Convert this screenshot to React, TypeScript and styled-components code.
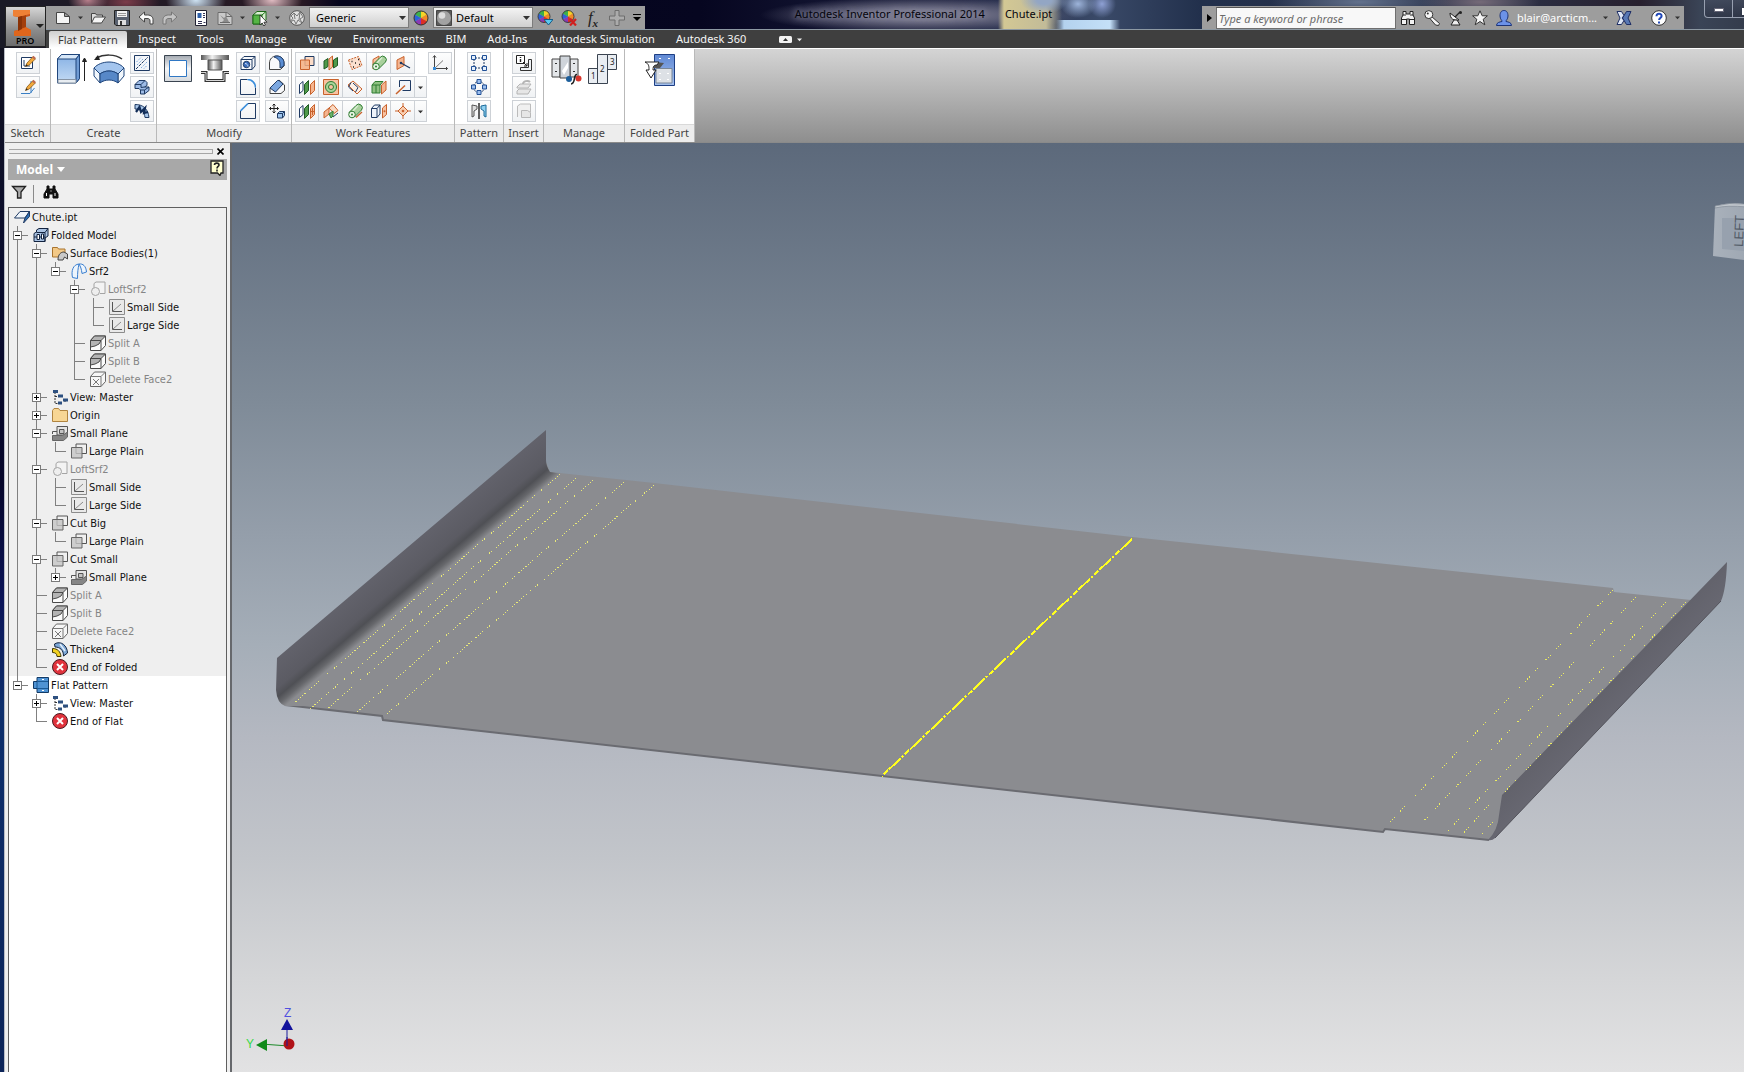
import React, { ReactNode } from "react";
import styled, { createGlobalStyle, css } from "styled-components";

const ui = `"Noto Sans", "Open Sans", sans-serif`;
const treeFont = `"DejaVu Sans Condensed", "DejaVu Sans", sans-serif`;

const Global = createGlobalStyle`
  * { box-sizing: border-box; }
  html, body { margin: 0; height: 100%; overflow: hidden; }
  #root { height: 100%; }
  body { font-family: ${ui}; font-size: 11px; color: #222; }
  button, input, select { font: inherit; color: inherit; margin: 0; }
  button { border: 0; background: none; padding: 0; cursor: default; }
`;

/* ---------- layout ---------- */

const Window = styled.div`
  display: flex;
  flex-direction: column;
  min-height: 100vh;
  height: 100%;
  background: linear-gradient(#14141f 0, #0a0d2e 25%, #06062a 45%, #0b1458 56%, #0e2f6c 66%, #0c2458 100%);
`;

const Header = styled.header`
  display: grid;
  grid-template-columns: 42px 1fr;
  grid-template-rows: 30px 18px;
  flex: none;
  padding-left: 4px;
  background:
    radial-gradient(ellipse 20px 14px at 88px 0, #b8808c, transparent),
    radial-gradient(ellipse 34px 14px at 126px 2px, #7c3c4a, transparent),
    radial-gradient(ellipse 30px 20px at 196px 0, #cfe4f4, transparent),
    radial-gradient(ellipse 30px 18px at 272px 0, #e0bcc2, transparent),
    radial-gradient(ellipse 24px 14px at 1044px 0, #93a6c4 30%, transparent),
    linear-gradient(90deg, #d3c89400 998px, #d3c894 1004px, #c2bb98 1046px, #b8b79c00 1062px) 0 0 / 100% 29px no-repeat,
    radial-gradient(ellipse 18px 14px at 1078px 4px, #9db4da, transparent),
    radial-gradient(ellipse 14px 14px at 1102px 4px, #8ea0d4, transparent),
    linear-gradient(90deg, #bcdcf800 1056px, #b4d2ee 1064px, #c4e0f8 1110px, #bcdcf800 1120px) 0 20px / 100% 9px no-repeat,
    radial-gradient(ellipse 160px 18px at 920px 15px, #77778c 30%, #77778c00),
    radial-gradient(ellipse 90px 16px at 1360px 2px, #62718c, transparent),
    radial-gradient(ellipse 60px 16px at 1480px 2px, #756a78, transparent),
    linear-gradient(90deg, #1a1a26 0, #2a1a24 300px, #04041c 340px, #060620 700px, #1d2140 960px, #3a4a68 1100px, #22304c 1200px, #2c3248 1500px, #28202e 1640px, #3a4456 1700px, #343c4c);
`;

const AppButton = styled.button`
  grid-row: 1 / 3;
  margin: 6px 0 1px 1px;
  border: 1px solid #222;
  background: linear-gradient(#d6d6d6, #8b8b8b 60%, #6c6c6c);
  display: flex;
  flex-direction: column;
  align-items: flex-start;
  font-size: 9px;
  font-weight: 600;
  line-height: 10px;
  color: #000;
  svg { display: block; }
`;
const AppLabel = styled.span`padding-left: 10px;`;

const TitleBar = styled.div`
  display: flex;
  align-items: stretch;
  border-bottom: 1px solid #8d99a3;
  min-width: 0;
`;

const Bar = styled.div<{ $pad?: number }>`
  display: flex;
  align-items: center;
  flex: none;
  margin-top: 6px;
  background: #9d9d9d;
  padding-left: ${(p) => p.$pad ?? 0}px;
`;

const ToolButton = styled.button<{ $w?: number }>`
  width: ${(p) => p.$w ?? 24}px;
  height: 22px;
  flex: none;
  display: flex;
  align-items: center;
  justify-content: center;
`;
const FxButton = styled(ToolButton)`
  font-family: "Liberation Serif", serif;
  font-style: italic;
  font-size: 17px;
  color: #222;
  sub { font-size: 11px; font-weight: 700; line-height: 1; align-self: flex-end; }
`;
const Spacer = styled.span<{ $w: number }>`
  width: ${(p) => p.$w}px;
  flex: none;
`;

const SelectWrap = styled.label`
  position: relative;
  display: flex;
  align-items: center;
  width: 100px;
  height: 21px;
  border: 1px solid #7c7c7c;
  background: linear-gradient(#f4f4f4, #cfcfcf);
  padding-left: 2px;
  > svg:last-child { position: absolute; right: 2px; pointer-events: none; }
`;
const Select = styled.select`
  appearance: none;
  border: 0;
  background: none;
  flex: 1;
  min-width: 0;
  padding: 0 12px 0 4px;
  color: #000;
  outline: 0;
`;

const Title = styled.h1`
  flex: 1;
  min-width: 0;
  margin: 0;
  display: flex;
  justify-content: center;
  gap: 20px;
  white-space: nowrap;
  font-size: 11px;
  line-height: 28px;
  font-weight: 400;
  color: #05050c;
`;
const Product = styled.span`
  text-shadow: 0 0 6px #8c8ca2, 0 0 8px #8484a0;
`;

const SearchInput = styled.input`
  width: 180px;
  height: 22px;
  border: 1px solid #6f6f6f;
  border-top-color: #555;
  background: #f8f8f8;
  padding: 2px 2px 0;
  font-style: italic;
  &::placeholder { color: #6a6a6a; opacity: 1; }
`;
const UserButton = styled.button`
  display: flex;
  align-items: center;
  gap: 5px;
  width: 112px;
  color: #fff;
  svg { flex: none; }
`;
const UserName = styled.span`flex: 1; text-align: left; white-space: nowrap;`;

const Controls = styled.div`
  flex: none;
  width: 60px;
  padding-left: 20px;
  overflow: hidden;
  display: flex;
  align-items: flex-start;
`;
const ControlButton = styled.button<{ $first?: boolean }>`
  width: 29px;
  flex: none;
  height: 18px;
  border: 1px solid #98a0b0;
  border-top: 0;
  background: linear-gradient(#48506488, #2a304288);
  ${(p) => (p.$first ? css`border-bottom-left-radius: 4px;` : css`border-left: 0;`)}
  padding-left: 9px;
  padding-top: 8px;
  display: flex;
`;

const Tabs = styled.nav`
  display: flex;
  align-items: stretch;
  background: #3f3f3f;
  padding-left: 3px;
  min-width: 0;
`;
const Tab = styled.button<{ $active?: boolean }>`
  padding: 0 11px 0 10px;
  line-height: 16px;
  white-space: nowrap;
  color: #f6f6f6;
  ${(p) =>
    p.$active &&
    css`
      margin-top: 1px;
      padding: 0 9px;
      margin-right: 1px;
      color: #3a3a3a;
      background: linear-gradient(#cfcfcf, #fff);
      border-radius: 2px 2px 0 0;
    `}
`;
const TabTools = styled.div`
  display: flex;
  align-items: center;
  gap: 5px;
  padding-left: 22px;
`;

const Frame = styled.div`
  flex: 1;
  min-height: 0;
  display: flex;
  flex-direction: column;
  margin-left: 4px;
  border-left: 1px solid #b8bcc4;
  background: #efefef;
`;

const Ribbon = styled.div`
  display: flex;
  flex: none;
  height: 95px;
  border-top: 1px solid #fff;
  border-bottom: 1px solid #8a8a8a;
  background: linear-gradient(#d4d4d4, #8e8e8e);
`;
const Group = styled.section<{ $w: number }>`
  width: ${(p) => p.$w}px;
  flex: none;
  display: flex;
  flex-direction: column;
  background: #fff;
  border-right: 1px solid #b9b9b9;
`;
const GroupBody = styled.div<{ $end?: boolean; $gap: number }>`
  flex: 1;
  display: flex;
  align-items: flex-start;
  justify-content: ${(p) => (p.$end ? "flex-end" : "center")};
  gap: ${(p) => p.$gap}px;
  padding: 3px ${(p) => (p.$end ? 2 : 0)}px 0 0;
`;
const GroupLabel = styled.h2`
  margin: 0;
  height: 18px;
  line-height: 16px;
  font-size: 11px;
  font-weight: 400;
  text-align: center;
  white-space: nowrap;
  color: #444;
  background: #ededed;
  border-top: 1px solid #d9d9d9;
`;
const Column = styled.div`
  display: flex;
  flex-direction: column;
  gap: 2px;
`;
const ButtonRow = styled.div`display: flex;`;
const Small = styled.button<{ $w?: number }>`
  width: ${(p) => p.$w ?? 24}px;
  height: 22px;
  border: 1px solid #cdd1d6;
  background: linear-gradient(#fdfdfd, #f0f2f4);
  display: flex;
  align-items: center;
  justify-content: center;
  & + & { border-left: 0; }
`;
const Big = styled.button`
  width: 32px;
  padding-top: 1px;
  display: flex;
  justify-content: center;
`;

const Work = styled.main`
  flex: 1;
  min-height: 0;
  display: flex;
`;
const Panel = styled.aside`
  width: 227px;
  flex: none;
  display: flex;
  flex-direction: column;
  background: #efefef;
  border-right: 2px solid #66686c;
  padding: 0 3px;
`;
const Grip = styled.div`
  display: flex;
  align-items: center;
  justify-content: space-between;
  height: 16px;
  padding-left: 1px;
`;
const GripLines = styled.div`
  flex: 1;
  height: 5px;
  border: 1px solid #a6a6a6;
  border-left: 0;
`;
const CloseButton = styled.button`
  width: 14px;
  height: 14px;
  display: flex;
  align-items: center;
  justify-content: flex-end;
  padding-right: 3px;
`;
const PanelHeader = styled.div`
  display: flex;
  align-items: center;
  justify-content: space-between;
  height: 21px;
  padding: 0 3px 0 8px;
  background: #a8a8a8;
`;
const PanelTitle = styled.button`
  display: flex;
  align-items: center;
  gap: 4px;
  font-family: "Open Sans", "Noto Sans", sans-serif;
  font-size: 12px;
  font-weight: 700;
  color: #fff;
`;
const PanelTools = styled.div`
  display: flex;
  align-items: center;
  height: 27px;
  padding-left: 3px;
`;
const Divider = styled.span`
  width: 1px;
  height: 18px;
  margin: 0 9px 0 6px;
  background: #8a8a8a;
`;
const Tree = styled.div`
  flex: 1;
  min-height: 0;
  overflow: hidden;
  border: 1px solid #5f5f5f;
  border-bottom: 0;
  background: #fff;
  font-family: ${treeFont};
  font-size: 11px;
`;
const Row = styled.div<{ $shade: boolean; $dim?: boolean }>`
  display: flex;
  align-items: center;
  height: 18px;
  background: ${(p) => (p.$shade ? "#efefef" : "#fff")};
  color: ${(p) => (p.$dim ? "#858585" : "#111")};
  white-space: nowrap;
  svg { flex: none; margin: 0 2px 0 5px; }
`;
const Guide = styled.span<{ $up: boolean; $down: boolean; $arm: boolean }>`
  width: 19px;
  height: 18px;
  flex: none;
  display: flex;
  align-items: center;
  padding-left: 4px;
  background-repeat: no-repeat;
  background-image: linear-gradient(#808080, #808080), linear-gradient(#808080, #808080), linear-gradient(#808080, #808080);
  background-size: ${(p) => (p.$up ? "1px 9px" : "0 0")}, ${(p) => (p.$down ? "1px 9px" : "0 0")}, ${(p) => (p.$arm ? "11px 1px" : "0 0")};
  background-position: 8px 0, 8px 9px, 8px 9px;
`;
const Expander = styled.button`
  width: 9px;
  height: 9px;
  border: 1px solid #7a7a7a;
  background: #fff;
  display: grid;
  place-items: center;
  svg { margin: 0; display: block; }
`;

const Viewport = styled.div`
  flex: 1;
  min-width: 0;
  overflow: hidden;
  background: linear-gradient(#5c697b 0, #7f8b98 28%, #949eaa 42%, #a5aeb8 54%, #b4b8c1 64%, #c2c5ca 77%, #d5d6d8 90%, #e2e2e3 100%);
  svg { display: block; width: 100%; height: 100%; }
`;

/* ---------- icons ---------- */

const N = "#1f3a63";
const O = "#c8622c";
const G = "#2f7d32";

const Ic = ({ children, s = 16, w, h }: { children: ReactNode; s?: number; w?: number; h?: number }) => (
  <svg width={w ?? s} height={h ?? s} viewBox={`0 0 ${w ?? s} ${h ?? s}`} fill="none" aria-hidden="true">
    {children}
  </svg>
);

const Down = ({ c = "#333", s = 7 }: { c?: string; s?: number }) => (
  <svg width={s} height={s} viewBox="0 0 7 7" aria-hidden="true">
    <path d="M0 2h7L3.500 6z" fill={c} />
  </svg>
);

const pencil = (
  <>
    <path d="M5.500 11.500 7 8l6-6.500 2.500 2.300L9.300 10z" fill="#f2a93c" stroke="#8a5a14" strokeWidth=".8" />
    <path d="m12 2.500 1.500-1.700 2.300 2.200-1.500 1.600z" fill="#c06a50" />
    <path d="m5.500 11.500 1-2.300 1.400 1.300z" fill="#222" />
  </>
);
const Wheel = ({ x = 8, y = 8, r = 7 }: { x?: number; y?: number; r?: number }) => (
  <g transform={`translate(${x} ${y}) scale(${r / 7})`}>
    <path d="M0 0V-7A7 7 0 0 1 6 -3.500z" fill="#f5d327" />
    <path d="M0 0 6-3.500A7 7 0 0 1 6 3.500z" fill="#f08a24" />
    <path d="M0 0 6 3.500A7 7 0 0 1 0 7z" fill="#dc2f26" />
    <path d="M0 0V7A7 7 0 0 1-6 3.500z" fill="#8a3ab4" />
    <path d="M0 0-6 3.500A7 7 0 0 1-6-3.500z" fill="#2d62d8" />
    <path d="M0 0-6-3.500A7 7 0 0 1 0-7z" fill="#3cb04a" />
    <circle r="7" stroke="#333" strokeWidth="1" />
  </g>
);
const planeL = <path d="M.5 5.500 4 2.500v9l-3.500 3z" fill="#fff" stroke={N} />;
const planeG = <path d="m5.500 5.500 4-4v10l-4 4z" fill="#4f9a4a" stroke="#1f5a24" />;
const planeO = <path d="m11.500 5.500 4-4v10l-4 4z" fill="#f5b590" stroke={O} />;
const cyl = (
  <>
    <path d="M2 9.500 9 2.500a3.500 3.500 0 0 1 5.500 4.500L7.500 14" fill="#a8d09c" stroke={G} />
    <path d="m6 8 5-5.500" stroke="#d8ecd0" strokeWidth="1.500" />
    <circle cx="5" cy="11.500" r="3.300" fill="#eaf5e5" stroke={G} />
    <circle cx="5" cy="11.500" r="1" fill={G} />
  </>
);

const icons: Record<string, ReactNode> = {
  newDoc: <path d="M1.500 2.500h8l5 4v7h-13z M9.500 2.500v4h5" fill="#f4f4f4" stroke="#444" />,
  open: <><path d="M1.500 12.500v-9h4l1 1.500h6v2" fill="#ddd" stroke="#444" /><path d="m1.500 13 3-6h11l-4 6z" fill="#f6f6f6" stroke="#444" /></>,
  save: <><path d="M.5 .5h15v15H2l-1.500-1.500z" fill="#5a6270" stroke="#222" /><path d="M3 1h10v6H3z" fill="#f2f2f2" /><path d="M4 10h8v5H4z" fill="#ddd" /><path d="M6 11h2v4H6z" fill="#333" /><path d="M4 3.500h8M4 5.500h8" stroke="#999" /></>,
  undo: <path d="M1 7 6.500 2v3h3c4 0 5.500 2.500 5.500 4.500V14h-3v-3c0-2-1-2.500-3-2.500H6.500v3.500z" fill="#fafafa" stroke="#444" />,
  redo: <path d="M15 7 9.500 2v3h-3C2.500 5 1 7.500 1 9.500V14h3v-3c0-2 1-2.500 3-2.500h2.500v3.500z" fill="#c4c4c4" stroke="#777" />,
  local: <><path d="M2.500.5h11v15h-11z" fill="#fff" stroke="#223" /><path d="M4.500 3h4v5h-4z" fill="#2d5fa8" /><path d="M10 3.500h2M10 5.500h2M10 7.500h2M5 11.500h4M5 13.500h4M10.500 12.500h2" stroke="#335" /></>,
  update: <><path d="M1 2.500h9l5 4v8H1z" fill="#c9c9c9" stroke="#6c6c6c" /><path d="M9 2.500v4h6" stroke="#6c6c6c" /><path d="m3 5 4 3 2-2 3 6H5l2-2z" fill="#8b8b8b" /><path d="M3 12.500h10" stroke="#6c6c6c" /></>,
  pick: <><path d="M1 5 5 1.500h9V10l-4 4H1z" fill="#d8f0d0" stroke="#1d6a18" /><path d="M1 5h9v9H1z" fill="#55b545" stroke="#1d6a18" /><path d="m10 5 4-3.500" stroke="#1d6a18" /><path d="M8 5v10l2.200-2 1.500 3 1.700-1-1.500-2.800H15z" fill="#fff" stroke="#222" strokeWidth=".8" /></>,
  ball: <><circle cx="8" cy="8" r="7.300" fill="#e0e0e0" stroke="#555" /><path d="m2 6 3-3 3 3 3-4 3 5-3 2 2 4-4-3-2 4-2-4-4 2 3-4z M5 3l1 6M11 2l-1 8" stroke="#777" /></>,
  wheel: <Wheel />,
  sphere: <><path d="M.5.500h15v15H.5z" fill="#5c5c5c" stroke="#444" /><circle cx="8" cy="8" r="7" fill="#a2a2a2" /><circle cx="6" cy="5.500" r="3.300" fill="#ddd" /></>,
  wheelDown: <><Wheel x={7} y={6.500} r={6} /><path d="M7 9.500h9L11.500 15z" fill="#5cc8ee" stroke="#155a88" /></>,
  wheelX: <><Wheel x={7} y={6.500} r={6} /><path d="m9 9 6 6.500m0-6.500-6 6.500" stroke="#d02020" strokeWidth="2.200" /></>,
  plus: <path d="M6 .5h4v5.500h5.500v4H10v5.500H6V10H.5V6H6z" stroke="#6d6d6d" fill="#ababab" />,
  binoc: <><path d="M3 1.500h3V4h4V1.500h3V5l1.500 3v6.500h-5V9h-3v5.500h-5V8L3 5z" fill="#f2f2f2" stroke="#222" /><path d="M1.500 9.500h5M9.500 9.500h5M3 5h3M10 5h3" stroke="#222" /></>,
  key: <><path d="m7 6 8.500 7.500-1 2-3-.5L5.500 8z" fill="#f4f4f4" stroke="#333" /><circle cx="4.800" cy="4.600" r="4" fill="#f4f4f4" stroke="#333" /><circle cx="3.800" cy="3.500" r="1" fill="#333" /></>,
  dish: <><path d="M2 3c0 6 4 8 9 7z" fill="#f6f6f6" stroke="#222" /><path d="m7 7 5-5" stroke="#222" strokeWidth="1.300" /><path d="m6 10-3 5h9l-3-5z" fill="#eee" stroke="#222" /><circle cx="12.500" cy="2.500" r="1.500" fill="#222" /></>,
  star: <path d="m8 .8 2.200 5h5.200l-4.200 3.500 1.600 5.500L8 11.500l-4.800 3.300 1.600-5.500L.6 5.800h5.200z" fill="#f4f4f4" stroke="#333" />,
  user: <><path d="M.5 15.500c0-3 3-3.500 5.500-4 .5-1-2-2-2-5.500C4 2 5.800.5 8 .5S12 2 12 6c0 3.500-2.500 4.500-2 5.500 2.500.5 5.500 1 5.500 4z" fill="#6c92e8" stroke="#1d3478" /></>,
  xch: <><path d="M1 1.500h4.500L8 5.500l-2 2.500 2 2.500-2.500 4H1L4 8z" fill="#dfe7f6" stroke="#1f2f66" /><path d="M15 1.500h-4.500L6.500 8l4 6.500H15L12 8z" fill="#5878b4" stroke="#1f2f66" /></>,
  help: <><circle cx="8" cy="8" r="7.300" fill="#fff" stroke="#333" /><path d="M5.500 6.200C5.500 3 10.600 3 10.600 6c0 2-2.500 2-2.500 4M8 11.500v2" stroke="#2148b8" strokeWidth="2" /></>,

  sk1: <><path d="M1.500 2.500h11v11h-11z" fill="#fff" stroke={N} /><path d="M4 11V5M4 11h6" stroke={N} />{pencil}</>,
  sk2: <><path d="M1 14.500h9M10 14.500 14.500 9M11 2v12" stroke="#3a7fc4" />{pencil}</>,
  face: <><path d="M.5.500h15v15H.5z" fill="#f3f6fa" stroke={N} /><path d="M2 14 14 2" stroke={N} strokeDasharray="3 1" /><path d="m2.500 7 4.500-4.500M3 10l7-7M7 13l6.500-6.500M10 13.500l3.500-3.500" stroke="#4a8ad0" strokeDasharray="1 1.500" /></>,
  fold: <><path d="m1 5.500 4-4h6l2 2v3l-2.500 1.500h4.500v3.500L10.500 15h-4v-4L5 9.500H1z" fill="#9dbbe6" stroke={N} /><path d="M1 5.500h6l4-4M7 5.500v3l3.500-.5M6.500 11h4l4.500-3M10.500 11v4" stroke={N} /></>,
  contour: <><path d="M1 1.500c8 0 13 4 14 13h-4C10.500 9 7 6 1 6z" fill="#a9c8ec" stroke={N} /><path d="m2 9 3.500-5 1.500 5 4-4-1 5 4-1" stroke="#122d58" strokeWidth="2.200" /></>,
  hole: <><path d="M1 4.500 4 1.500h11V11l-3 3.500H1z" fill="#f6f8fb" stroke={N} /><path d="M1 4.500h11v10M12 4.500l3-3" stroke={N} /><circle cx="6.500" cy="9.500" r="3.200" fill="#3b6fc0" stroke={N} /><path d="M5 8.500c2 0 3 2 3 3" stroke="#dfe8f6" /></>,
  bendS: <><path d="M.5 14.500V8c0-4 3-7 7-7s7.500 3 7.500 7v3l-3.500 3.500z" fill="#f8f9fb" stroke="#444" /><path d="M5 2c1-1 2-1 3-1 4 0 7 3 7 7v3l-4 2V9C11 5 8 3 5 2z" fill="#5b8ed4" stroke={N} /></>,
  round: <><path d="M.5.500h7M15.500 8.500v7H.5V.5" stroke={N} /><path d="M7.500.500a8 8 0 0 1 8 8" stroke="#3b8edb" strokeWidth="1.600" /></>,
  chamfer3: <><path d="M1 9v5.500h11l3.500-3V6L10 1z" fill="#f8f9fb" stroke="#444" /><path d="M1 9 8.500 1.500H10L14 5l-7.500 8z" fill="#7ba7e0" stroke={N} /></>,
  chamfer: <><path d="M8 .5h7.500v15H.5V8" stroke={N} /><path d="M.5 8 8 .5" stroke="#3b8edb" strokeWidth="1.600" /></>,
  move: <><path d="M5 1v9M.5 5.500h9M3.500 2.500 5 1l1.500 1.500M3.500 8.500 5 10l1.500-1.500M2 4 .5 5.500 2 7M8 4l1.500 1.500L8 7" stroke="#222" /><path d="m8.500 10.500 2-2h5v4l-2 2.500h-5z" fill="#9fc6ee" stroke={N} /><path d="M8.500 10.500h5V15M13.500 10.500l2-2" stroke={N} /></>,

  w1: <><path d="M6 1.500h9v9H6z" fill="#fbdcc8" stroke={N} /><path d="M1.500 5h9v9.500h-9z" fill="#f5ae80" stroke={O} fillOpacity=".85" /></>,
  w2: <><path d="m1 6 4-2.500v8L1 14z" fill="#4f9a4a" stroke="#1f5a24" /><path d="m10.500 5 4-2.500v8l-4 2.500z" fill="#4f9a4a" stroke="#1f5a24" /><path d="m6 4 3.500-3v11L6 15z" fill="#f7c2a2" stroke={O} /></>,
  w3: <><path d="m1.500 5 10-3.500 3.500 9-10 4z" fill="#fbe0cf" stroke={O} strokeDasharray="2 1" /><path d="M4.500 6.500h1M11 4.500h1M8 8h1M6 12h1M12 9.500h1" stroke="#222" strokeWidth="1.600" /></>,
  w4: <><path d="M2 4.500 8 1v9l-6 4z" fill="#f7c2a2" stroke={O} />{cyl}</>,
  w5: <><path d="m2 5 7-3.500v9L2 14.500z" fill="#f5b590" stroke={O} /><path d="m6 8 9 5" stroke={N} strokeWidth="1.300" /><circle cx="6" cy="8" r="1.300" fill={N} /></>,
  w6: <>{planeL}{planeG}{planeO}</>,
  w7: <><path d="M.5.500h15v15H.5z" fill="#f7c2a2" stroke={O} /><circle cx="8" cy="8" r="5.500" fill="#a8d49a" stroke={G} /><circle cx="8" cy="8" r="2.500" fill="#f7c2a2" stroke={G} /></>,
  w8: <><path d="m1 6 5-4 9 8-5 5z" fill="#fdf0e6" stroke={O} /><path d="M4 3.500 1.500 8 6 12M6 4l5 4.500L8.500 13" stroke={N} /></>,
  w9: <><path d="m1 6 3-3.500h8L9 6v8H1z" fill="#8fc182" stroke={G} /><path d="M1 6h8M5 6v8" stroke={G} /><path d="m10.500 6 4.500-4v9l-4.500 4z" fill="#f5b590" stroke={O} /></>,
  w10: <><path d="M4.500 1.500h11v10h-8M4.500 1.500V8" fill="#f0f3f8" stroke={N} /><path d="m1 15 9-8.500" stroke={O} strokeWidth="1.500" /></>,
  w11: <>{planeL}{planeG}{planeO}<path d="M13.500 5v7M12 8.500h3" stroke={O} /></>,
  w12: <><path d="m1 9 5-4v6l-5 4z" fill="#f5b590" stroke={O} /><path d="m6 5 4-3.500 5 6-4 3z" fill="#fbd8c0" stroke={O} /><path d="m6 11 4-3v5l-2 2z" fill="#6ab06a" stroke={G} /><path d="m10 14 5-4" stroke={N} /></>,
  w13: <>{cyl}<path d="m9 14.500 6-5.500" stroke={O} strokeWidth="1.300" /></>,
  w14: <><path d="m.5 5.500 3-3.500h5.500v9l-3 3.500H.5z" fill="#eef3fa" stroke={N} /><path d="M.5 5.500H6v9M6 5.500 9 2" stroke={N} /><path d="m11.500 5 4-3.500v10l-4 3.500z" fill="#f7c2a2" stroke={O} /><circle cx="13.500" cy="8.300" r="1" fill={O} /></>,
  w15: <><path d="m8 3 5 5-5 5-5-5z" fill="#f9cfb2" stroke={O} /><path d="M8 0v4M8 12v4M0 8h4M12 8h4" stroke={O} /><circle cx="8" cy="8" r="1.300" fill={O} /></>,
  axis: <><path d="M2.500 1v12.500h13M1 2.500l1.500-2 1.500 2M14 12l1.500 1.500L14 15" stroke="#444" /><path d="m2.500 13.500 8.500-8" stroke="#777" /><path d="M1 12h3v3H1z" fill="#3b8edb" /></>,
  p1: <><path d="M4 3h8M4 13h8M3 4v8M13 4v8" stroke={N} strokeDasharray="2 1" /><path d="M.5.500h4v4h-4zM11.500.500h4v4h-4zM.5 11.500h4v4h-4zM11.500 11.500h4v4h-4z" fill="#e4effc" stroke="#1f4f96" /></>,
  p2: <><circle cx="8" cy="8" r="5.500" stroke={N} strokeDasharray="2 1" /><path d="M6 .5h4v4H6zM6 11.500h4v4H6zM.5 6h4v4h-4zM11.500 6h4v4h-4z" fill="#9dbfee" stroke="#1f4f96" /></>,
  p3: <><path d="M8 0v16" stroke="#222" strokeWidth="1.400" /><path d="M1 2v12l2-1V8l3-2V3z" fill="#ddd" stroke="#555" /><path d="M15 2v12l-2-1V8l-3-2V3z" fill="#8fd0f0" stroke="#1b6a9a" /></>,
  i1: <><path d="M.5.500h8v8h-8z" fill="#fff" stroke="#222" /><path d="M4.500 2v1M4.500 4v3" stroke="#222" strokeWidth="1.400" /><path d="M12.500 4.500h3v11h-11v-3h8z" fill="#eef1f4" stroke="#333" /><path d="m7 7 4 4M11 8v3H8" stroke="#222" /></>,
  i2: <><path d="m1 8 3-3h11l-3 4H1z M1 12l2-2h12l-3 5H1z" fill="#e6e6e6" stroke="#b4b4b4" /><path d="M7 5c0-3 5-4 7-2" stroke="#b4b4b4" strokeWidth="2" /></>,
  i3: <><path d="M1.500 14V3l3-2h10v8" stroke="#bcbcbc" fill="#f0f0f0" /><path d="M5.500 7.500h6l3 2v5h-9z" fill="#e6e6e6" stroke="#b8b8b8" /></>,

  part: <><path d="M.5 9 6 2.500h9.500L11 9z" fill="#f0f6fc" stroke={N} /><path d="m11 9 4.500-6.500v5L9.500 14z" fill="#2d6fb4" stroke={N} /></>,
  folded: <><path d="M1 6.500 3.500 5V3L6 1.500h9V9l-3 2v3.500H1z" fill="#a9c2e2" stroke="#12233f" /><path d="M3.500 5.500H12v9M12 5.500l3-4M1 10h11" stroke="#12233f" /><path d="M4 7.500h2.500v5H4zM8.500 7h2v5h-2z" fill="#fff" stroke="#12233f" /></>,
  bodies: <><path d="M.5 12V2.500h5l1 1.500H13v8z" fill="#f3c987" stroke="#a9742e" /><path d="M6 15c0-6 3-8 6-8l3.500 2v5l-3-2-1.500 3z" fill="#c9c9c9" stroke="#444" /></>,
  srf: <path d="M1.500 14.500C0 8 2 1.500 8 1c4-.5 7 2 7.500 8L11 10.500C10.500 6 9.500 3.500 8 1M1.500 14.500l5 1c0-6 .5-10 1.500-14.500" fill="#edf5fd" stroke="#3a7fd0" />,
  loft: <><path d="M4 2.500 6 1h9v11.500h-5M4 7V2.500" stroke="#a4a4a4" fill="#f3f3f3" /><circle cx="5.500" cy="10.500" r="4" fill="#eee" stroke="#a4a4a4" /></>,
  sketch: <><path d="M.5.500h15v15H.5z" fill="#e9e9e9" stroke="#8c8c8c" /><path d="M3.500 3v9.500H13" stroke="#555" /><path d="m4 12 8-7" stroke="#8a8a8a" /></>,
  split: <><path d="m.5 5.500 4-4.500h11v9.500l-4.500 5H.5z" fill="#fbfbfb" stroke="#4a4a4a" /><path d="m.5 5.500 4-4.500h11L11 5.500 9 9l-4 2-4.500 1z" fill="#b4b4b4" stroke="#4a4a4a" /><path d="M.5 5.500H11v10" stroke="#4a4a4a" /></>,
  del: <><path d="m.5 5.500 4-4.500h11v9.500l-4.500 5H.5z" fill="#f6f6f6" stroke="#666" /><path d="M.5 5.500H11v10M11 5.500 15.500 1M3 8l6 6M9 8l-6 6" stroke="#777" /></>,
  view: <><path d="M3 3v11.500h3M3 7.500h4M9 7.500h3M12 12h3" stroke="#333" strokeDasharray="2 1" /><path d="M1 1h5v3H1zM6 5.500h5v3H6zM6 12.500h4v3H6zM11 9.500h5v3h-5z" fill="#2d5080" /></>,
  folder: <path d="M.5 14.500v-11l1.500-2h4.500L8 3.500h7.500v11z" fill="#f7d694" stroke="#b08440" />,
  wplane: <><path d="M5 1.500h10.500v8.500H5z" fill="#e4e4e4" stroke="#555" /><path d="M7.500 4.500H12v4H7.500z" fill="#c4c4c4" stroke="#555" /><path d="M.5 10.500h10l5-3.500v5l-4 3.500H.5z" fill="#868686" stroke="#666" /><path d="M.5 9V6.500H5" stroke="#555" /></>,
  plane2: <><path d="M5 1h10.500v9.500H5z" fill="#f0f0f0" stroke="#555" /><path d="M.5 4.500h10.500v10.500H.5z" fill="#c4c4c4" fillOpacity=".8" stroke="#666" /></>,
  thicken: <><path d="M.5 7.500c5 0 8 3 8.500 8H5c0-3-2-4-4.500-4z" fill="#f4d322" stroke="#433900" /><path d="M2.500 3C9-1 15.500 5 15.500 12l-4 3C11.500 9 8 6 3 6z" fill="#7ea9d8" stroke="#12233f" /><path d="m8 3 5 7" stroke="#e4effa" strokeWidth="1.500" /></>,
  end: <><circle cx="8" cy="8" r="7.500" fill="#e0323c" stroke="#4c1a20" /><path d="m5 5 6 6m0-6-6 6" stroke="#fff" strokeWidth="2" /></>,
  flat: <><path d="M.5 4.500H4v-4h11.500v15H4v-4H.5z" fill="#4f93d4" stroke="#123a66" /><path d="M4 5v6M4 4.500h11M4 11.500h11" stroke="#1b5a96" /><path d="M9 2.500h2M9 13.500h2" stroke="#fff" /></>,
};

const Icon = ({ n }: { n: string }) => <Ic>{icons[n]}</Ic>;

const BigExtrude = () => (
  <Ic w={32} h={32}>
    <defs><linearGradient id="ex" x1="0" y1="0" x2="0" y2="1"><stop stopColor="#86b0e4" /><stop offset="1" stopColor="#c4dbf4" /></linearGradient></defs>
    <path d="m1.500 6 4-4.500h18v24L20 30H1.500z" fill="url(#ex)" stroke="#20467c" />
    <path d="m1.500 6 4-4.500h18L20 6z" fill="#d7e7f8" stroke="#20467c" />
    <path d="m20 6 3.500-4.500v24L20 30z" fill="#6f9bd4" stroke="#20467c" />
    <path d="M2 26.500h18V30H2z" fill="#e8edf2" stroke="#8794a4" />
    <path d="M28.500 6v22M26.500 8.500l2-3.500 2 3.500z" stroke="#222" fill="#222" />
  </Ic>
);
const BigBend = () => (
  <Ic w={32} h={32}>
    <path d="M3 5C11 1 22 1 29 6" stroke="#333" strokeWidth="1.500" />
    <path d="m1 7 4-5 2 5z" fill="#222" />
    <path d="M1 15C8 7 24 7 31 15l-6 6c-5-4-13-4-18 0z" fill="#a4c5ee" stroke="#20467c" />
    <path d="m1 15 6 6v9l-6-7zM31 15l-6 6v9l6-7z" fill="#f2f7fc" stroke="#20467c" />
    <path d="M7 21c5-4 13-4 18 0v9c-5-4-13-4-18 0z" fill="#5788c8" stroke="#20467c" />
  </Ic>
);
const BigCut = () => (
  <Ic w={30} h={30}>
    <defs><linearGradient id="cut" x1="0" y1="0" x2="0" y2="1"><stop stopColor="#a4aab2" /><stop offset=".5" stopColor="#f4f5f6" /><stop offset="1" stopColor="#d4d8dc" /></linearGradient></defs>
    <path d="M1.500 2.500h27v26h-27z" fill="url(#cut)" stroke="#3a4450" />
    <path d="M6.500 7.500h17v16h-17z" fill="#fff" stroke="#2f77c4" />
  </Ic>
);
const BigPunch = () => (
  <Ic w={30} h={30}>
    <defs><linearGradient id="pn"><stop stopColor="#555" /><stop offset=".4" stopColor="#f2f2f2" /><stop offset="1" stopColor="#555" /></linearGradient></defs>
    <path d="M1 2h28v5H1z" fill="url(#pn)" />
    <path d="M8 7h14v10H8z" fill="url(#pn)" stroke="#555" />
    <path d="M1 19.500h5v8h18v-8h5" stroke="#333" strokeWidth="3" />
    <path d="M1 19.500h5v8h18v-8h5" stroke="#d8d8d8" />
  </Ic>
);
const BigDefaults = () => (
  <Ic w={32} h={32}>
    <path d="M2 6h8v18H2zM20 6h8v18h-8z" fill="#e4e7ea" stroke="#444" />
    <path d="M10 3h10v22H10z" fill="#cfd4da" stroke="#444" />
    <path d="m12 18 6-9v6l-4 7z" fill="#fff" />
    <path d="M6 10v1M6 18v1M24 10v1M24 18v1" stroke="#333" strokeWidth="2" />
    <circle cx="19" cy="26" r="3" fill="#1d5f9c" /><circle cx="28.500" cy="25.500" r="3" fill="#d8352c" />
    <path d="M21 31c5 0 2-10 6-9.500" stroke="#222" strokeWidth="1.600" />
  </Ic>
);
const Digit = styled.text`font-family: ${ui}; font-size: 8px; fill: #222;`;
const BigOrder = () => (
  <Ic w={32} h={32}>
    <path d="M1.500 15.500h9v15h-9zM10.500 1.500h10v29h-10zM20.500 1.500h9v15h-9z" fill="#e9edf2" stroke="#3a4350" />
    <Digit x="4" y="26">1</Digit><Digit x="13" y="19">2</Digit><Digit x="23" y="12">3</Digit>
  </Ic>
);
const BigFolded = () => (
  <Ic w={32} h={34}>
    <defs><linearGradient id="fp" x1="0" y1="0" x2="0" y2="1"><stop stopColor="#5f88d4" /><stop offset="1" stopColor="#a4c0ee" /></linearGradient></defs>
    <path d="M10.500 1.500h20v31h-20z" fill="url(#fp)" stroke="#1e3f84" />
    <path d="M12 15.500h16V30H12z" fill="#dde1e6" stroke="#7a8798" />
    <path d="M16 5v1M25 5v1M16 20v1M24 20v1M16 26v1M24 26v1" stroke="#fff" strokeWidth="2" />
    <path d="m10 9 10 1-4 5H9z" fill="#555" />
    <path d="M1 9h14l-2 3c-3 0-4 1-4 5h3l-5 8-5-8h3c0-4 0-6-4-8z" fill="#fff" stroke="#222" />
  </Ic>
);

/* ---------- data ---------- */

type Item = [guides: string, icon: string, label: string, dim?: boolean];
const tree: Item[] = [
  ["", "part", "Chute.ipt"],
  ["m", "folded", "Folded Model"],
  ["|m", "bodies", "Surface Bodies(1)"],
  ["||M", "srf", "Srf2"],
  ["|| m", "loft", "LoftSrf2", true],
  ["|| |t", "sketch", "Small Side"],
  ["|| |e", "sketch", "Large Side"],
  ["|| t", "split", "Split A", true],
  ["|| t", "split", "Split B", true],
  ["|| e", "del", "Delete Face2", true],
  ["|p", "view", "View: Master"],
  ["|p", "folder", "Origin"],
  ["|m", "wplane", "Small Plane"],
  ["||e", "plane2", "Large Plain"],
  ["|m", "loft", "LoftSrf2", true],
  ["||t", "sketch", "Small Side"],
  ["||e", "sketch", "Large Side"],
  ["|m", "plane2", "Cut Big"],
  ["||e", "plane2", "Large Plain"],
  ["|m", "plane2", "Cut Small"],
  ["||P", "wplane", "Small Plane"],
  ["|t", "split", "Split A", true],
  ["|t", "split", "Split B", true],
  ["|t", "del", "Delete Face2", true],
  ["|t", "thicken", "Thicken4"],
  ["|e", "end", "End of Folded"],
  ["M", "flat", "Flat Pattern"],
  [" p", "view", "View: Master"],
  [" e", "end", "End of Flat"],
];
const foldedRows = 26;

const tabs = ["Flat Pattern", "Inspect", "Tools", "Manage", "View", "Environments", "BIM", "Add-Ins", "Autodesk Simulation", "Autodesk 360"];

const TreeRow = ({ item, shade }: { item: Item; shade: boolean }) => {
  const [guides, icon, label, dim] = item;
  return (
    <Row role="treeitem" aria-level={guides.length + 1} $shade={shade} $dim={dim}>
      {guides.split("").map((g, i) => (
        <Guide key={i} $up={g !== " "} $down={"|tmp".includes(g)} $arm={"temMpP".includes(g)}>
          {"mMpP".includes(g) && (
            <Expander aria-label={"mM".includes(g) ? "Collapse" : "Expand"}>
              <svg width="5" height="5" viewBox="0 0 5 5"><path d={"mM".includes(g) ? "M0 2.500h5" : "M0 2.500h5M2.500 0v5"} stroke="#000" /></svg>
            </Expander>
          )}
        </Guide>
      ))}
      <Icon n={icon} />
      {label}
    </Row>
  );
};

const Rows = ({ rows }: { rows: string[][] }) => (
  <Column>
    {rows.map((r, i) => (
      <ButtonRow key={i}>
        {r.map((n) => n === "dd"
          ? <Small key={n} $w={12} aria-label="More"><Down s={5} /></Small>
          : <Small key={n} aria-label={n}><Icon n={n} /></Small>)}
      </ButtonRow>
    ))}
  </Column>
);

const RibbonGroup = ({ label, w, end, gap = 5, children }: { label: string; w: number; end?: boolean; gap?: number; children: ReactNode }) => (
  <Group $w={w} aria-label={label}>
    <GroupBody $end={end} $gap={gap}>{children}</GroupBody>
    <GroupLabel>{label}</GroupLabel>
  </Group>
);

const Tool = ({ n, label }: { n: string; label: string }) => (
  <ToolButton aria-label={label}><Icon n={n} /></ToolButton>
);
const Drop = ({ w = 11, c }: { w?: number; c?: string }) => (
  <ToolButton $w={w} aria-label="Options"><Down s={5} c={c} /></ToolButton>
);

const SceneText = styled.text<{ $size: number }>`
  font-family: "Liberation Sans", Arial, sans-serif;
  font-size: ${(p) => p.$size}px;
`;

const bendsLeft = [[559, 474, 293, 703], [575, 478, 309, 709], [592, 480, 326, 709], [623, 482, 355, 713], [653, 485, 386, 714]];
const bendsRight = [[1612, 590, 1386, 825], [1635, 597, 1415, 829], [1665, 602, 1446, 832], [1685, 602, 1500, 796], [1488, 805, 1460, 836], [1492, 822, 1480, 836]];

const Scene = () => (
  <svg viewBox="231 143 1513 929" preserveAspectRatio="xMinYMin slice" role="img" aria-label="Chute flat pattern">
    <defs>
      <linearGradient id="fl" gradientUnits="userSpaceOnUse" x1="276" y1="658" x2="303" y2="690">
        <stop stopColor="#62626b" /><stop offset=".55" stopColor="#5b5b63" /><stop offset=".72" stopColor="#4f5055" /><stop offset=".86" stopColor="#66676b" /><stop offset="1" stopColor="#8b8c90" />
      </linearGradient>
      <linearGradient id="fr" gradientUnits="userSpaceOnUse" x1="1600" y1="690" x2="1622" y2="711">
        <stop stopColor="#62626b" /><stop offset="1" stopColor="#686872" />
      </linearGradient>
      <linearGradient id="cube"><stop stopColor="#a9b1bb" /><stop offset="1" stopColor="#9fa8b3" /></linearGradient>
    </defs>
    <path d="M545 462 549 472 653 483 1131 537 1612 588 1613 592 1690 600 1720 601 1494 838 1488 840 1384 829 1382 832 881 776 382 720 381 716 284 705 279 702z" fill="#8b8c90" />
    <path d="M284 705 381 716 382 720 881 776 1382 832 1384 829 1488 840" fill="none" stroke="#6a6b71" strokeWidth="2" />
    <path d="M545 430 276 658 275 690Q276 703 284 706L306 706 562 474 549 472Q545 466 545 460z" fill="url(#fl)" />
    <path d="M1501 795 1726 562Q1725 590 1720 601L1494 838Q1491 841 1487 840 1497 830 1498 815z" fill="url(#fr)" />
    <path d="M1720 601 1494 838" stroke="#55555d" fill="none" />
    <g stroke="#e8e878" shapeRendering="crispEdges">
      {bendsLeft.map(([a, b, c, d]) => <path key={a} d={`M${a} ${b} ${c} ${d}`} strokeDasharray="1 2 1 2 1 2 1 2 1 2 1 2 1 5" />)}
    </g>
    <g stroke="#ecec60" shapeRendering="crispEdges">
      {bendsRight.map(([a, b, c, d]) => <path key={a} d={`M${a} ${b} ${c} ${d}`} strokeDasharray="1 2 1 2 1 8" />)}
    </g>
    <path d="M1131 539 881 776" stroke="#ffff1e" strokeWidth="2" strokeDasharray="16 1 6 2 2 2" shapeRendering="crispEdges" />
    <path d="M1714 206q14-4 30-2v56l-32-4z" fill="url(#cube)" />
    <path d="M1714 206q14-4 30-2l2 3q-20-2-32 1z" fill="#c0c6cd" stroke="#78838f" strokeWidth=".6" />
    <path d="M1721 218h23v33l-23-2z" fill="#97a1ae" />
    <SceneText $size={13} transform="translate(1742 247) rotate(-88)" fill="#515a66">LEFT</SceneText>
    <path d="m288 1046-28-2" stroke="#1d8a2a" />
    <path d="m255 1045 11-6v12z" fill="#118a1a" />
    <path d="M286 1045v-22" stroke="#1a1a9c" />
    <path d="m286 1019 6 11h-12z" fill="#12129c" />
    <circle cx="288" cy="1044" r="5.500" fill="#b01218" />
    <path d="M286 1037v9" stroke="#1a1a9c" />
    <SceneText $size={12} x="283" y="1017" fill="#5050e0">Z</SceneText>
    <SceneText $size={12} x="245" y="1048" fill="#38d848">Y</SceneText>
  </svg>
);

export default function App() {
  return (
    <Window>
      <Global />
      <Header>
        <AppButton aria-label="Application menu">
          <Ic w={38} h={29}>
            <path d="M7 3h17v6l-4 1v12l5 1v6H8v-5l4-1V10L7 9z" fill="#c8541a" />
            <path d="m12 10 8-2v14l-8 2z" fill="#a33f0c" /><path d="M7 3h17v4L12 10 7 9z" fill="#ee8136" /><path d="m12 23 8-3 5 3v6H8v-5z" fill="#e0661c" /><path d="m12 10 4-1v13l-4 2z" fill="#8a3206" />
            <path d="M30 17h8l-4 4z" fill="#222" />
          </Ic>
          <AppLabel>PRO</AppLabel>
        </AppButton>
        <TitleBar>
          <Bar $pad={5}>
            <Tool n="newDoc" label="New" /><Drop />
            <Tool n="open" label="Open" /><Tool n="save" label="Save" /><Tool n="undo" label="Undo" /><Tool n="redo" label="Redo" />
            <Spacer $w={7} />
            <Tool n="local" label="Home" /><Tool n="update" label="Update" /><Drop />
            <Tool n="pick" label="Select" /><Drop />
            <Spacer $w={2} />
            <Tool n="ball" label="Material" />
            <SelectWrap><Select aria-label="Material" defaultValue="Generic"><option>Generic</option></Select><Down /></SelectWrap>
            <Tool n="wheel" label="Appearance" />
            <SelectWrap><Icon n="sphere" /><Select aria-label="Appearance" defaultValue="Default"><option>Default</option></Select><Down /></SelectWrap>
            <Tool n="wheelDown" label="Adjust" /><Tool n="wheelX" label="Clear" />
            <FxButton aria-label="Parameters">f<sub>x</sub></FxButton>
            <Tool n="plus" label="Add" />
            <ToolButton $w={16} aria-label="Customize"><Ic w={8} h={8}><path d="M0 .5h8" stroke="#000" /><path d="M0 3h8L4 7z" fill="#000" /></Ic></ToolButton>
          </Bar>
          <Title><Product>Autodesk Inventor Professional 2014</Product><span>Chute.ipt</span></Title>
          <Bar>
            <ToolButton $w={14} aria-label="Collapse search"><Ic w={5} h={8}><path d="M0 0v8l5-4z" fill="#000" /></Ic></ToolButton>
            <SearchInput aria-label="Search" placeholder="Type a keyword or phrase" />
            <Tool n="binoc" label="Find" />
            <Tool n="key" label="Subscription" />
            <Tool n="dish" label="Communication" />
            <Tool n="star" label="Favorites" />
            <Spacer $w={4} />
            <UserButton><Icon n="user" /><UserName>blair@arcticm...</UserName><Down s={5} /></UserButton>
            <Spacer $w={4} />
            <Tool n="xch" label="Exchange" />
            <Spacer $w={11} />
            <Tool n="help" label="Help" />
            <Drop w={13} />
          </Bar>
          <Controls>
            <ControlButton $first aria-label="Minimize"><Ic w={10} h={4}><path d="M.5.500h9v3h-9z" fill="#fff" stroke="#667" /></Ic></ControlButton>
            <ControlButton aria-label="Maximize"><Ic w={12} h={8}><path d="M1 1h9v5H1z" stroke="#fff" strokeWidth="2" /></Ic></ControlButton>
          </Controls>
        </TitleBar>
        <Tabs>
          {tabs.map((t, i) => <Tab key={t} $active={i === 0}>{t}</Tab>)}
          <TabTools>
            <ToolButton $w={13} aria-label="Minimize ribbon"><Ic w={13} h={7}><rect width="13" height="7" rx="1.500" fill="#f2f2f2" /><path d="M4 5h5L6.500 2z" fill="#333" /></Ic></ToolButton>
            <Down s={5} c="#f2f2f2" />
          </TabTools>
        </Tabs>
      </Header>
      <Frame>
        <Ribbon>
          <RibbonGroup label="Sketch" w={46}><Rows rows={[["sk1"], ["sk2"]]} /></RibbonGroup>
          <RibbonGroup label="Create" w={106} end>
            <Big aria-label="Face"><BigExtrude /></Big><Big aria-label="Contour flange"><BigBend /></Big>
            <Rows rows={[["face"], ["fold"], ["contour"]]} />
          </RibbonGroup>
          <RibbonGroup label="Modify" w={135} end>
            <Big aria-label="Cut"><BigCut /></Big><Big aria-label="Punch tool"><BigPunch /></Big>
            <Rows rows={[["hole"], ["round"], ["chamfer"]]} /><Rows rows={[["bendS"], ["chamfer3"], ["move"]]} />
          </RibbonGroup>
          <RibbonGroup label="Work Features" w={163} end gap={1}>
            <Rows rows={[["w1", "w2", "w3", "w4", "w5"], ["w6", "w7", "w8", "w9", "w10", "dd"], ["w11", "w12", "w13", "w14", "w15", "dd"]]} />
            <Rows rows={[["axis"]]} />
          </RibbonGroup>
          <RibbonGroup label="Pattern" w={49}><Rows rows={[["p1"], ["p2"], ["p3"]]} /></RibbonGroup>
          <RibbonGroup label="Insert" w={40}><Rows rows={[["i1"], ["i2"], ["i3"]]} /></RibbonGroup>
          <RibbonGroup label="Manage" w={81}><Big aria-label="Sheet metal defaults"><BigDefaults /></Big><Big aria-label="Bend order"><BigOrder /></Big></RibbonGroup>
          <RibbonGroup label="Folded Part" w={70}><Big aria-label="Go to folded part"><BigFolded /></Big></RibbonGroup>
        </Ribbon>
        <Work>
          <Panel>
            <Grip>
              <GripLines />
              <CloseButton aria-label="Close panel"><Ic w={7} h={7}><path d="m.5.500 6 6m0-6-6 6" stroke="#000" strokeWidth="1.600" /></Ic></CloseButton>
            </Grip>
            <PanelHeader>
              <PanelTitle>Model<Ic w={8} h={5}><path d="M0 0h8L4 5z" fill="#fff" /></Ic></PanelTitle>
              <button aria-label="Help"><Ic w={14} h={16}><path d="M1 1h12v12h-2l-1 2.500L7.500 13H1z" fill="#ffffd0" stroke="#222" strokeWidth="1.300" /><path d="M4.500 5C4.500 2.500 9 2.500 9 5c0 1.500-2 1.500-2 3.500M7 9.500v2" stroke="#222" strokeWidth="1.600" /></Ic></button>
            </PanelHeader>
            <PanelTools>
              <button aria-label="Filter"><Ic w={16} h={14}><path d="M1.500 1.500h13L10 7v6H6.500V7z" fill="#aaa" stroke="#222" strokeWidth="1.300" /></Ic></button>
              <Divider />
              <button aria-label="Find"><Ic w={16} h={14}><path d="M4 1h2v3h4V1h2v3l3 5v4h-5V9H6v4H1V9l3-5z" fill="#111" stroke="#111" /><path d="M3.500 8v3M12 8v3M7.500 6h1" stroke="#fff" /></Ic></button>
            </PanelTools>
            <Tree role="tree" aria-label="Model">
              {tree.map((item, i) => <TreeRow key={i} item={item} shade={i < foldedRows} />)}
            </Tree>
          </Panel>
          <Viewport><Scene /></Viewport>
        </Work>
      </Frame>
    </Window>
  );
}
